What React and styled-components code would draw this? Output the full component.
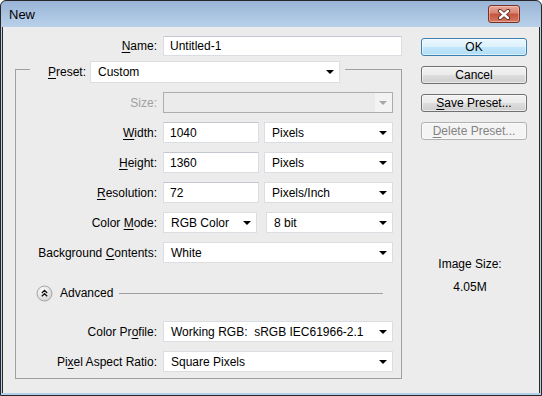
import React from 'react';
import styled, { createGlobalStyle } from 'styled-components';

const GlobalStyle = createGlobalStyle`
  html, body { margin: 0; padding: 0; background: #ffffff; }
  body {
    font-family: "Liberation Sans", Arial, sans-serif;
    font-size: 12px;
    color: #000;
  }
  * { box-sizing: border-box; }
`

const Window = styled.div`
  width: 542px;
  height: 396px;
  border: 1px solid #262626;
  border-radius: 6px 6px 0 0;
  background: linear-gradient(#99b4d6, #b9d1ea 26px, #b4cfe9);
  padding: 0 1px 2px 1px;
  display: flex;
  flex-direction: column;
  overflow: hidden;
`

const TitleBar = styled.div`
  height: 26px;
  flex: none;
  display: flex;
  justify-content: space-between;
  align-items: flex-start;
  padding: 5px 20px 0 7px;
`

const Title = styled.div`
  font-family: "Liberation Sans", Arial, sans-serif;
  font-size: 13px;
  line-height: 17px;
  color: #000;
`

const CloseButton = styled.div`
  width: 32px;
  height: 18px;
  margin-top: -1px;
  border: 1px solid #7a3024;
  border-radius: 3px;
  background: linear-gradient(#e6a99c, #d8826f 45%, #c4533d 50%, #d37a64);
  box-shadow: inset 0 0 0 1px rgba(255, 220, 210, .45);
  display: flex;
  align-items: center;
  justify-content: center;
`

const Client = styled.div`
  flex: 1;
  background: #ececec;
  border-left: 1px solid #2a2a2a;
  border-right: 1px solid #2a2a2a;
  display: flex;
  gap: 19px;
  padding: 9px 0 0 12px;
`

const LeftCol = styled.div`
  width: 387px;
  display: flex;
  flex-direction: column;
`

const RightCol = styled.div`
  width: 106px;
  padding-top: 2px;
  display: flex;
  flex-direction: column;
  gap: 10px;
`

const Row = styled.div`
  display: grid;
  grid-template-columns: ${p => p.$label || 141}px 230px;
  column-gap: 6px;
  align-items: center;
  margin-top: ${p => p.$gap ?? 9}px;
`

const Label = styled.div`
  text-align: right;
  white-space: nowrap;
  color: ${p => (p.$disabled ? '#a0a0a0' : '#000')};
`

const U = styled.span`
  text-decoration: underline;
  text-underline-offset: 2px;
`

const Field = styled.div`
  height: ${p => p.$h || 21}px;
  width: ${p => (p.$w ? `${p.$w}px` : 'auto')};
  background: #fff;
  border: 1px solid #dadee3;
  border-top-color: #c4c8ce;
  padding: 0 6px;
  display: flex;
  align-items: center;
  white-space: nowrap;
`

const Combo = styled(Field)`
  position: relative;
  padding-left: 7px;
  background: ${p => (p.$disabled ? '#ebebeb' : '#fff')};
  border-color: ${p => (p.$disabled ? '#adadad' : '#dadee3')};
  &::before {
    content: '';
    display: ${p => (p.$disabled ? 'block' : 'none')};
    position: absolute;
    right: 0;
    top: 0;
    bottom: 0;
    width: 17px;
    background: #f3f3f3;
  }
  &::after {
    content: '';
    position: absolute;
    right: 5px;
    top: 50%;
    margin-top: -2px;
    border-left: 4px solid transparent;
    border-right: 4px solid transparent;
    border-top: 4px solid ${p => (p.$disabled ? '#a8a8a8' : '#000')};
  }
`

const Pair = styled.div`
  display: flex;
  justify-content: space-between;
`

const Group = styled.fieldset`
  margin: -1px 0 0 0;
  padding: 9px 0 6px 0;
  border: 1px solid #a0a0a0;
  min-width: 0;
`

const Legend = styled.legend`
  margin-left: 14px;
  padding: 6px 5px 0 5px;
  display: flex;
  align-items: center;
  gap: 4px;
`

const LegendLabel = styled(Label)`
  width: 51px;
`

const AdvancedRow = styled.div`
  display: flex;
  align-items: center;
  height: 16px;
  margin-top: 22px;
  padding: 0 18px 0 20px;
`

const AdvancedText = styled.span`
  margin: 0 6px 0 7px;
  white-space: nowrap;
`

const Rule = styled.div`
  flex: 1;
  height: 1px;
  background: #a0a0a0;
`

const Button = styled.div`
  height: 18px;
  border: 1px solid ${p => (p.$default ? '#3c7fb1' : p.$disabled ? '#adb2b5' : '#707070')};
  border-radius: 3px;
  background: ${p =>
    p.$default
      ? 'linear-gradient(#ebf7fd, #dcf1fc 50%, #c3e7fb 50%, #afddf6)'
      : p.$disabled
      ? '#f4f4f4'
      : 'linear-gradient(#f2f2f2, #ebebeb 50%, #dddddd 50%, #cfcfcf)'};
  box-shadow: inset 0 0 0 1px rgba(255, 255, 255, .55);
  color: ${p => (p.$disabled ? '#838383' : '#000')};
  display: flex;
  align-items: center;
  justify-content: center;
  white-space: nowrap;
  line-height: 14px;
`

const SizeInfo = styled.div`
  margin-top: 107px;
  display: flex;
  flex-direction: column;
  align-items: center;
  gap: 8px;
  line-height: 15px;
  padding-right: 8px;
`

const CloseIcon = () => (
  <svg width="14" height="11" viewBox="0 0 14 11">
    <path d="M3 2 L11 9 M11 2 L3 9" stroke="#5d2218" strokeWidth="4.2" strokeLinecap="round" />
    <path d="M3 2 L11 9 M11 2 L3 9" stroke="#ffffff" strokeWidth="2.4" strokeLinecap="round" />
  </svg>
)

const AdvancedIcon = () => (
  <svg width="17" height="17" viewBox="0 0 17 17">
    <defs>
      <radialGradient id="adv" cx="0.4" cy="0.35" r="0.7">
        <stop offset="0" stopColor="#ffffff" />
        <stop offset="1" stopColor="#d2d2d2" />
      </radialGradient>
    </defs>
    <circle cx="8.5" cy="8.5" r="7.5" fill="url(#adv)" stroke="#a4a4a4" />
    <path d="M5.8 8 L8.5 5.4 L11.2 8 M5.8 11.3 L8.5 8.7 L11.2 11.3" fill="none" stroke="#111" strokeWidth="1.3" />
  </svg>
)

const App = () => {
  return (
    <>
      <GlobalStyle />
      <Window>
        <TitleBar>
          <Title>New</Title>
          <CloseButton>
            <CloseIcon />
          </CloseButton>
        </TitleBar>
        <Client>
          <LeftCol>
            <Row $label={142} $gap={0}>
              <Label><U>N</U>ame:</Label>
              <Field $h={20} $w={239}>Untitled-1</Field>
            </Row>
            <Group>
              <Legend>
                <LegendLabel><U>P</U>reset:</LegendLabel>
                <Combo $h={22} $w={250}>Custom</Combo>
              </Legend>
              <Row $gap={0}>
                <Label $disabled>Size:</Label>
                <Combo $disabled />
              </Row>
              <Row>
                <Label><U>W</U>idth:</Label>
                <Pair>
                  <Field $w={96}>1040</Field>
                  <Combo $w={129}>Pixels</Combo>
                </Pair>
              </Row>
              <Row>
                <Label><U>H</U>eight:</Label>
                <Pair>
                  <Field $w={96}>1360</Field>
                  <Combo $w={129}>Pixels</Combo>
                </Pair>
              </Row>
              <Row>
                <Label><U>R</U>esolution:</Label>
                <Pair>
                  <Field $w={96}>72</Field>
                  <Combo $w={129}>Pixels/Inch</Combo>
                </Pair>
              </Row>
              <Row>
                <Label>Color <U>M</U>ode:</Label>
                <Pair>
                  <Combo $w={94}>RGB Color</Combo>
                  <Combo $w={127}>8 bit</Combo>
                </Pair>
              </Row>
              <Row>
                <Label>Background <U>C</U>ontents:</Label>
                <Combo>White</Combo>
              </Row>
              <AdvancedRow>
                <AdvancedIcon />
                <AdvancedText>Advanced</AdvancedText>
                <Rule />
              </AdvancedRow>
              <Row $gap={20}>
                <Label>Color Pr<U>o</U>file:</Label>
                <Combo>Working RGB:&nbsp; sRGB IEC61966-2.1</Combo>
              </Row>
              <Row>
                <Label>Pi<U>x</U>el Aspect Ratio:</Label>
                <Combo>Square Pixels</Combo>
              </Row>
            </Group>
          </LeftCol>
          <RightCol>
            <Button $default>OK</Button>
            <Button>Cancel</Button>
            <Button><span><U>S</U>ave Preset...</span></Button>
            <Button $disabled><span><U>D</U>elete Preset...</span></Button>
            <SizeInfo>
              <div>Image Size:</div>
              <div>4.05M</div>
            </SizeInfo>
          </RightCol>
        </Client>
      </Window>
    </>
  );
};

export default App;
